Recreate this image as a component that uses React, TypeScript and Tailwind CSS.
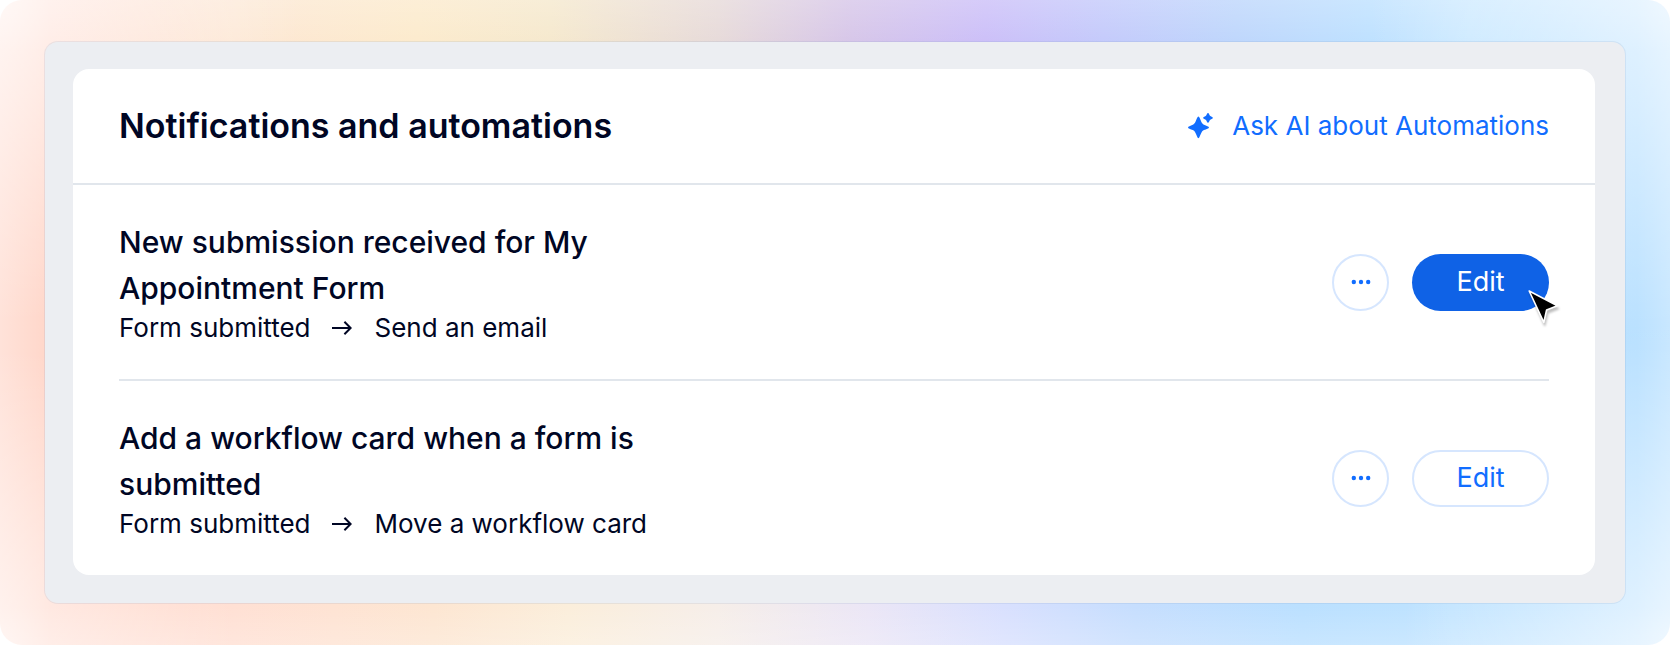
type Automation = {
  title: string;
  trigger: string;
  action: string;
  active?: boolean;
};

const automations: Automation[] = [
  {
    title: "New submission received for My Appointment Form",
    trigger: "Form submitted",
    action: "Send an email",
    active: true,
  },
  {
    title: "Add a workflow card when a form is submitted",
    trigger: "Form submitted",
    action: "Move a workflow card",
  },
];

function SparkleIcon() {
  return (
    <svg width="26" height="28" viewBox="0 0 26 28" fill="currentColor" aria-hidden="true">
      <path d="M10.4 4.6C11.4 4.6 12.2 7.6 13.4 10C14.2 11.5 14.6 11.9 16 12.7C18.4 13.9 21 14.4 21 15.4C21 16.4 18.4 16.9 16 18.1C14.6 18.9 14.2 19.3 13.4 20.8C12.2 23.2 11.4 26.2 10.4 26.2C9.4 26.2 8.6 23.2 7.4 20.8C6.6 19.3 6.2 18.9 4.8 18.1C2.4 16.9 0 16.4 0 15.4C0 14.4 2.4 13.9 4.8 12.7C6.2 11.9 6.6 11.5 7.4 10C8.6 7.6 9.4 4.6 10.4 4.6Z" />
      <path d="M20 1C20.9 1 21.3 3 22 3.8C22.7 4.5 24.9 5 24.9 5.9C24.9 6.8 22.7 7.3 22 8C21.3 8.8 20.9 10.8 20 10.8C19.1 10.8 18.7 8.8 18 8C17.3 7.3 15.1 6.8 15.1 5.9C15.1 5 17.3 4.5 18 3.8C18.7 3 19.1 1 20 1Z" />
    </svg>
  );
}

function ArrowIcon() {
  return (
    <svg width="20" height="16" viewBox="0 0 20 16" fill="none" stroke="currentColor" strokeWidth="2" aria-hidden="true">
      <path d="M0 8H18.4M12.4 1.8L18.6 8L12.4 14.2" />
    </svg>
  );
}

function MoreIcon() {
  return (
    <svg width="20" height="6" viewBox="0 0 20 6" fill="currentColor" aria-hidden="true">
      <circle cx="2.8" cy="3" r="2.2" />
      <circle cx="10" cy="3" r="2.2" />
      <circle cx="17.2" cy="3" r="2.2" />
    </svg>
  );
}

function Cursor() {
  return (
    <svg
      className="pointer-events-none absolute -right-3 -bottom-4 drop-shadow-[1px_3px_1px_rgba(0,0,0,0.25)]"
      width="36"
      height="40"
      viewBox="0 0 36 40"
      aria-hidden="true"
    >
      <path d="M4.2 4L32.4 18.8L21.6 23L18.8 35.4Z" fill="#000" stroke="#fff" strokeWidth="1.6" strokeLinejoin="round" />
    </svg>
  );
}

function AutomationRow({ title, trigger, action, active }: Automation) {
  return (
    <li className="flex items-center justify-between gap-6 py-[34px]">
      <div>
        <h3 className="max-w-[530px] text-[30px] leading-[46px] font-medium">{title}</h3>
        <p className="flex items-center gap-[22px] text-[26px] leading-[34px]">
          <span>{trigger}</span>
          <ArrowIcon />
          <span>{action}</span>
        </p>
      </div>
      <div className="flex shrink-0 items-center gap-[23px]">
        <button
          type="button"
          aria-label="More actions"
          className="flex size-[57px] items-center justify-center rounded-full border-2 border-[#d6e6fe] text-[#116dff]"
        >
          <MoreIcon />
        </button>
        <div className="relative">
          <button
            type="button"
            className={
              active
                ? "h-[57px] w-[137px] rounded-full bg-[#0f62e6] text-[27px] text-white"
                : "h-[57px] w-[137px] rounded-full border-2 border-[#d6e6fe] text-[27px] text-[#116dff]"
            }
          >
            Edit
          </button>
          {active && <Cursor />}
        </div>
      </div>
    </li>
  );
}

export default function App() {
  return (
    <main
      className="min-h-screen rounded-[22px] bg-no-repeat bg-[size:100%_100%,100%_100%,100%_100%,100%_100%,100%_100%,100%_100%,100%_50%,100%_100%] bg-[image:radial-gradient(ellipse_18%_50%_at_0%_0%,rgba(255,255,255,0.7),rgba(255,255,255,0)),radial-gradient(ellipse_14%_46%_at_0%_100%,rgba(255,255,255,0.6),rgba(255,255,255,0)),radial-gradient(ellipse_18%_54%_at_100%_0%,rgba(255,255,255,0.65),rgba(255,255,255,0)),radial-gradient(ellipse_16%_50%_at_100%_100%,rgba(255,255,255,0.65),rgba(255,255,255,0)),linear-gradient(to_right,rgba(255,255,255,0.3),rgba(255,255,255,0)_3%,rgba(255,255,255,0)_98%,rgba(255,255,255,0.2)),linear-gradient(to_bottom,rgba(255,255,255,0.22),rgba(255,255,255,0)_8%,rgba(255,255,255,0)_94%,rgba(255,255,255,0.2)),linear-gradient(to_right,#ffd6c9_3%,#fde6d2_14%,#fceacb_25%,#f5e8cc_33%,#e6d9d8_43%,#d5c4e8_51%,#cabdf8_59%,#c2c8fb_66%,#bcd5fc_74%,#bce0ff_82%,#c2e5ff_88%,#b8e0ff_98%),linear-gradient(to_right,#ffd6c9_3%,#ffe0d4_14%,#fde6d2_26%,#fbeedb_34%,#f6eee9_43%,#ebe6f6_52%,#d9e0fe_60%,#c6defe_68%,#bbe0ff_78%,#bfe3ff_87%,#b8e0ff_98%)] px-11 py-[41px] font-[Inter,'Liberation_Sans',sans-serif] text-[#000624]"
    >
      <div className="rounded-[14px] border border-[#7896be]/15 bg-[#eceef2] bg-clip-padding pt-[27px] pr-[30px] pb-7 pl-7">
        <section className="rounded-2xl bg-white">
          <header className="flex h-[116px] items-center justify-between border-b-2 border-[#e1e6ec] px-[46px]">
            <h2 className="text-[34px] leading-[46px] font-semibold">Notifications and automations</h2>
            <a href="#" className="flex items-center gap-[18px] text-[26px] leading-[34px] text-[#116dff]">
              <SparkleIcon />
              Ask AI about Automations
            </a>
          </header>
          <ul className="mx-[46px] divide-y-2 divide-[#e1e6ec]">
            {automations.map((a) => (
              <AutomationRow key={a.title} {...a} />
            ))}
          </ul>
        </section>
      </div>
    </main>
  );
}
